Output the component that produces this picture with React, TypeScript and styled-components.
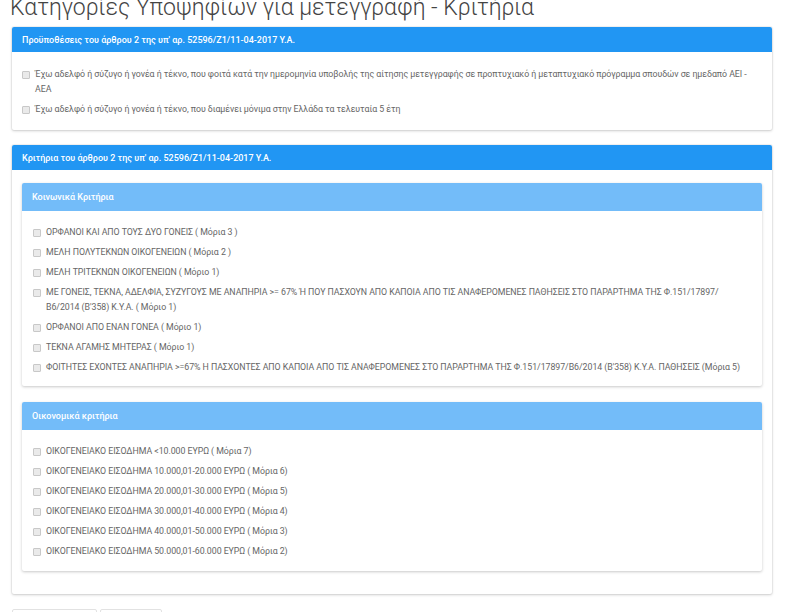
import React from "react";
import styled, { createGlobalStyle } from "styled-components";

const GlobalStyle = createGlobalStyle`
  html, body {
    margin: 0;
    padding: 0;
    background: #fff;
    font-family: Roboto, "Noto Sans", sans-serif;
    overflow: hidden;
  }
`;

const Page = styled.div`
  padding: 0 14px 0 12px;
`;

const Title = styled.h1`
  margin: -6px 0 6px -2px;
  font-size: 23px;
  line-height: 27px;
  font-weight: 300;
  color: #444;
  white-space: nowrap;
`;

const Panel = styled.section<{ $nested?: boolean }>`
  background: #fff;
  border-radius: 2px;
  box-shadow: ${(p) =>
    p.$nested
      ? "0 1px 3px rgba(0, 0, 0, 0.22)"
      : "0 1px 3px rgba(0, 0, 0, 0.18), 0 0 0 1px rgba(0, 0, 0, 0.04)"};
  margin-bottom: ${(p) => (p.$nested ? "11px" : "15px")};
  overflow: hidden;
`;

const PanelHeader = styled.div<{ $nested?: boolean }>`
  display: flex;
  align-items: center;
  height: ${(p) => (p.$nested ? "28px" : "25px")};
  padding: 0 10px;
  background: ${(p) => (p.$nested ? "#73bcf9" : "#2196f3")};
  color: #fff;
  font-size: 9px;
  font-weight: 500;
`;

const PanelBody = styled.div<{ $pad: string }>`
  padding: ${(p) => p.$pad};
  display: flex;
  flex-direction: column;
  gap: 5px;
`;

const CheckRow = styled.label`
  display: flex;
  align-items: flex-start;
  gap: 5px;
  font-size: 8.8px;
  letter-spacing: -0.05px;
  line-height: 15px;
  color: #666;
`;

const Box = styled.input.attrs({ type: "checkbox" })`
  appearance: none;
  flex: none;
  width: 8px;
  height: 8px;
  margin: 4px 0 0;
  border: 1px solid #c8c8c8;
  border-radius: 1px;
  background: #eaeaea;
  box-sizing: border-box;
`;

const Buttons = styled.div`
  display: flex;
  gap: 3px;
  margin-top: 1px;
`;

const Button = styled.button<{ $w: number }>`
  width: ${(p) => p.$w}px;
  height: 28px;
  border: 1px solid #e2e2e2;
  border-radius: 2px;
  background: #fff;
`;

const general = [
  "Έχω αδελφό ή σύζυγο ή γονέα ή τέκνο, που φοιτά κατά την ημερομηνία υποβολής της αίτησης μετεγγραφής σε προπτυχιακό ή μεταπτυχιακό πρόγραμμα σπουδών σε ημεδαπό ΑΕΙ - ΑΕΑ",
  "Έχω αδελφό ή σύζυγο ή γονέα ή τέκνο, που διαμένει μόνιμα στην Ελλάδα τα τελευταία 5 έτη",
];

const social = [
  "ΟΡΦΑΝΟΙ ΚΑΙ ΑΠΟ ΤΟΥΣ ΔΥΟ ΓΟΝΕΙΣ ( Μόρια 3 )",
  "ΜΕΛΗ ΠΟΛΥΤΕΚΝΩΝ ΟΙΚΟΓΕΝΕΙΩΝ ( Μόρια 2 )",
  "ΜΕΛΗ ΤΡΙΤΕΚΝΩΝ ΟΙΚΟΓΕΝΕΙΩΝ ( Μόριο 1)",
  "ΜΕ ΓΟΝΕΙΣ, ΤΕΚΝΑ, ΑΔΕΛΦΙΑ, ΣΥΖΥΓΟΥΣ ΜΕ ΑΝΑΠΗΡΙΑ >= 67% Ή ΠΟΥ ΠΑΣΧΟΥΝ ΑΠΟ ΚΑΠΟΙΑ ΑΠΟ ΤΙΣ ΑΝΑΦΕΡΟΜΕΝΕΣ ΠΑΘΗΣΕΙΣ ΣΤΟ ΠΑΡΑΡΤΗΜΑ ΤΗΣ Φ.151/17897/ Β6/2014 (Β'358) Κ.Υ.Α. ( Μόριο 1)",
  "ΟΡΦΑΝΟΙ ΑΠΟ ΕΝΑΝ ΓΟΝΕΑ ( Μόριο 1)",
  "ΤΕΚΝΑ ΑΓΑΜΗΣ ΜΗΤΕΡΑΣ ( Μόριο 1)",
  "ΦΟΙΤΗΤΕΣ ΕΧΟΝΤΕΣ ΑΝΑΠΗΡΙΑ >=67% Η ΠΑΣΧΟΝΤΕΣ ΑΠΟ ΚΑΠΟΙΑ ΑΠΟ ΤΙΣ ΑΝΑΦΕΡΟΜΕΝΕΣ ΣΤΟ ΠΑΡΑΡΤΗΜΑ ΤΗΣ Φ.151/17897/Β6/2014 (Β'358) Κ.Υ.Α. ΠΑΘΗΣΕΙΣ (Μόρια 5)",
];

const financial = [
  "ΟΙΚΟΓΕΝΕΙΑΚΟ ΕΙΣΟΔΗΜΑ <10.000 ΕΥΡΩ ( Μόρια 7)",
  "ΟΙΚΟΓΕΝΕΙΑΚΟ ΕΙΣΟΔΗΜΑ 10.000,01-20.000 ΕΥΡΩ ( Μόρια 6)",
  "ΟΙΚΟΓΕΝΕΙΑΚΟ ΕΙΣΟΔΗΜΑ 20.000,01-30.000 ΕΥΡΩ ( Μόρια 5)",
  "ΟΙΚΟΓΕΝΕΙΑΚΟ ΕΙΣΟΔΗΜΑ 30.000,01-40.000 ΕΥΡΩ ( Μόρια 4)",
  "ΟΙΚΟΓΕΝΕΙΑΚΟ ΕΙΣΟΔΗΜΑ 40.000,01-50.000 ΕΥΡΩ ( Μόρια 3)",
  "ΟΙΚΟΓΕΝΕΙΑΚΟ ΕΙΣΟΔΗΜΑ 50.000,01-60.000 ΕΥΡΩ ( Μόρια 2)",
];

const Checks: React.FC<{ items: string[] }> = ({ items }) => (
  <>
    {items.map((text) => (
      <CheckRow key={text}>
        <Box />
        <span>{text}</span>
      </CheckRow>
    ))}
  </>
);

export default function App() {
  return (
    <Page>
      <GlobalStyle />
      <Title>Κατηγορίες Υποψηφίων για μετεγγραφή - Κριτήρια</Title>

      <Panel>
        <PanelHeader>Προϋποθέσεις του άρθρου 2 της υπ' αρ. 52596/Ζ1/11-04-2017 Υ.Α.</PanelHeader>
        <PanelBody $pad="15px 10px 13px">
          <Checks items={general} />
        </PanelBody>
      </Panel>

      <Panel>
        <PanelHeader>Κριτήρια του άρθρου 2 της υπ' αρ. 52596/Ζ1/11-04-2017 Υ.Α.</PanelHeader>
        <PanelBody $pad="13px 10px 12px">
          <Panel $nested>
            <PanelHeader $nested>Κοινωνικά Κριτήρια</PanelHeader>
            <PanelBody $pad="14px 11px 11px">
              <Checks items={social} />
            </PanelBody>
          </Panel>
          <Panel $nested>
            <PanelHeader $nested>Οικονομικά κριτήρια</PanelHeader>
            <PanelBody $pad="14px 11px 12px">
              <Checks items={financial} />
            </PanelBody>
          </Panel>
        </PanelBody>
      </Panel>

      <Buttons>
        <Button $w={85} />
        <Button $w={62} />
      </Buttons>
    </Page>
  );
}
